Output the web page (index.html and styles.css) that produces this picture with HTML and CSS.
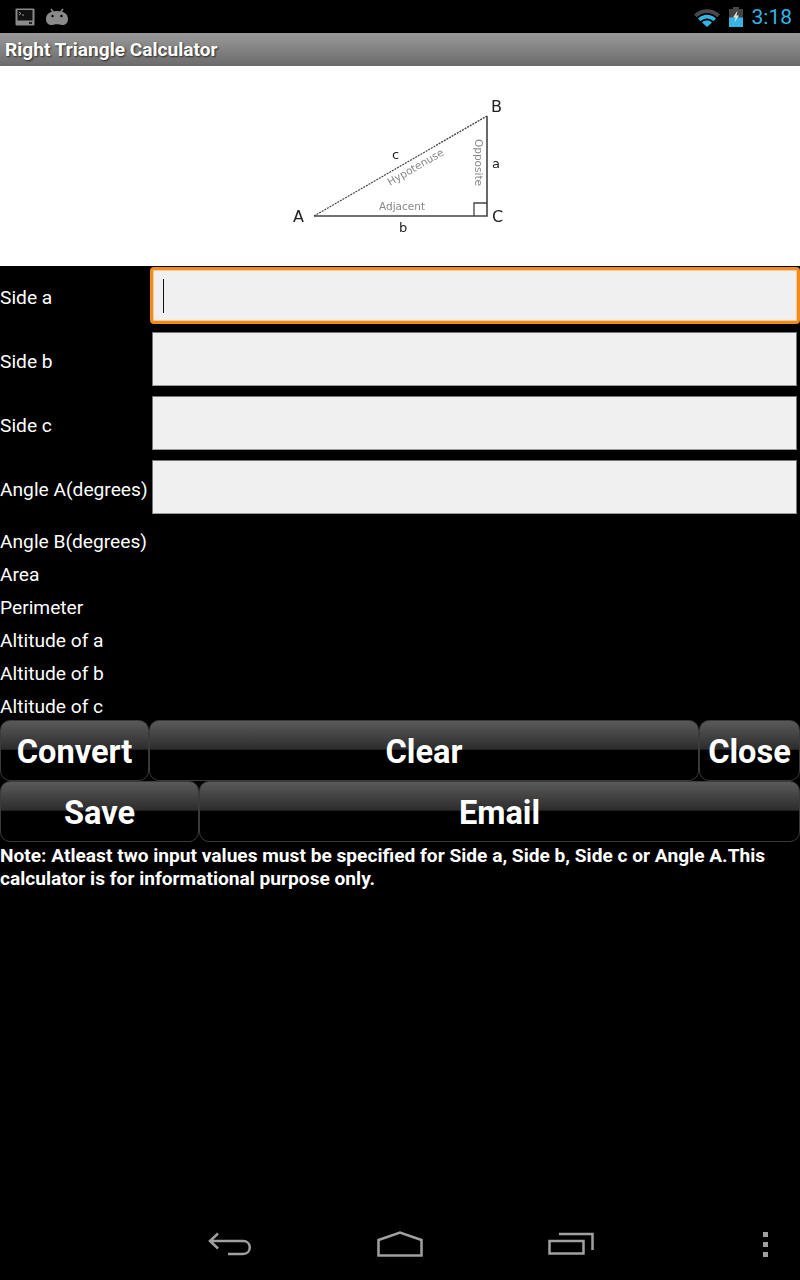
FILE: index.html
```html
<!DOCTYPE html>
<html lang="en">
<head>
    <meta charset="UTF-8">
    <meta name="viewport" content="width=device-width, initial-scale=1.0">
    <title>Right Triangle Calculator</title>
    <link rel="stylesheet" href="styles.css">
</head>
<body>
    <div class="page">
        <div class="status-bar">
            <div class="status-left">
                <svg class="icon-terminal" width="22" height="20" viewBox="0 0 22 20">
                    <rect x="1.500" y="1.500" width="19" height="17" rx="1" fill="#8a8a8a"/>
                    <rect x="3.500" y="3" width="15" height="10.500" fill="#111"/>
                    <path d="M5 5l2 1.500-2 1.500M8 8h2" stroke="#999" fill="none"/>
                    <rect x="15" y="15" width="3" height="2" fill="#222"/>
                </svg>
                <svg class="icon-android" width="24" height="18" viewBox="0 0 24 18">
                    <path d="M6 1l2.500 3.500M18 1l-2.500 3.500" stroke="#8a8a8a" stroke-width="1.500"/>
                    <path d="M1 11C1 6 5 3 12 3s11 3 11 8c0 4-2.500 6-6 6-2 0-3-.7-5-.7s-3 .7-5 .7c-3.500 0-6-2-6-6z" fill="#8a8a8a"/>
                    <circle cx="7.500" cy="8" r="1.200" fill="#000"/>
                    <circle cx="16.500" cy="8" r="1.200" fill="#000"/>
                </svg>
            </div>
            <div class="status-right">
                <svg class="icon-wifi" width="28" height="20" viewBox="0 0 28 20">
                    <path d="M1 7.500C8.500 .5 19.500 .5 27 7.500l-2.500 2.800C18 4.500 10 4.500 3.500 10.300z" fill="#4a4a4a"/>
                    <path d="M5 11.500c5.500-5 12.500-5 18 0l-2.500 2.700c-4-3.500-9-3.500-13 0z" fill="#33b5e5"/>
                    <path d="M9 15.500c3-2.600 7-2.600 10 0L14 20z" fill="#33b5e5"/>
                </svg>
                <svg class="icon-battery" width="14" height="20" viewBox="0 0 14 20">
                    <rect x="4" y="0" width="6" height="2" fill="#4a4a4a"/>
                    <rect x="0" y="2" width="14" height="18" fill="#444"/>
                    <rect x="0" y="10.500" width="14" height="9.500" fill="#33b5e5"/>
                    <path d="M8.500 3.500L4 10.500h2.500L5.500 15.500l4.500-7H7.500z" fill="#e0e0e0"/>
                </svg>
                <span class="clock">3:18</span>
            </div>
        </div>

        <div class="title-bar">Right Triangle Calculator</div>

        <div class="diagram">
            <svg width="800" height="200" viewBox="0 66 800 200">
                <path d="M314 216L487 116" stroke="#444" stroke-width="1.300" stroke-dasharray="2 1" fill="none"/>
                <path d="M314 216H487V116" stroke="#444" stroke-width="1.600" fill="none"/>
                <path d="M474 216V203H487" stroke="#444" stroke-width="1.300" fill="none"/>
                <text class="tri-label" x="293" y="222">A</text>
                <text class="tri-label" x="491" y="112">B</text>
                <text class="tri-label" x="492" y="222">C</text>
                <text class="tri-small" x="399" y="232">b</text>
                <text class="tri-small" x="492" y="168">a</text>
                <text class="tri-small" x="392" y="159">c</text>
                <text class="tri-faint" x="379" y="210">Adjacent</text>
                <text class="tri-faint" transform="translate(390 186) rotate(-30)">Hypotenuse</text>
                <text class="tri-faint" transform="translate(475 139) rotate(90)">Opposite</text>
            </svg>
        </div>

        <div class="form">
            <div class="input-row">
                <label class="field-label">Side a</label>
                <div class="field focused"><span class="caret"></span></div>
            </div>
            <div class="input-row">
                <label class="field-label">Side b</label>
                <div class="field"></div>
            </div>
            <div class="input-row">
                <label class="field-label">Side c</label>
                <div class="field"></div>
            </div>
            <div class="input-row">
                <label class="field-label">Angle A(degrees)</label>
                <div class="field"></div>
            </div>
        </div>

        <div class="results">
            <div class="result-row">Angle B(degrees)</div>
            <div class="result-row">Area</div>
            <div class="result-row">Perimeter</div>
            <div class="result-row">Altitude of a</div>
            <div class="result-row">Altitude of b</div>
            <div class="result-row">Altitude of c</div>
        </div>

        <div class="button-row">
            <button class="btn btn-convert">Convert</button>
            <button class="btn btn-clear">Clear</button>
            <button class="btn btn-close">Close</button>
        </div>
        <div class="button-row">
            <button class="btn btn-save">Save</button>
            <button class="btn btn-email">Email</button>
        </div>

        <p class="note">Note: Atleast two input values must be specified for Side a, Side b, Side c or Angle A.This calculator is for informational purpose only.</p>

        <div class="nav-bar">
            <svg class="nav-back" width="44" height="24" viewBox="0 0 44 24">
                <path d="M10 1.500L2 9l8 7.500M2 9h33c9 0 9 13 0 13H20" stroke="#a0a0a0" stroke-width="2.500" fill="none"/>
            </svg>
            <svg class="nav-home" width="46" height="26" viewBox="0 0 46 26">
                <path d="M1.500 24.500V9L23 1.500 44.500 9v15.500z" stroke="#a0a0a0" stroke-width="2.500" fill="none"/>
            </svg>
            <svg class="nav-recent" width="46" height="24" viewBox="0 0 46 24">
                <path d="M1.500 9h34v12.500h-34z" stroke="#a0a0a0" stroke-width="2.500" fill="none"/>
                <path d="M11 2h33.500v16" stroke="#a0a0a0" stroke-width="2.500" fill="none"/>
            </svg>
            <div class="nav-menu"><i></i><i></i><i></i></div>
        </div>
    </div>
</body>
</html>
```

FILE: styles.css
```css
* {
    margin: 0;
    padding: 0;
    box-sizing: border-box;
    font-family: 'Roboto', sans-serif;
}

body {
    background-color: #000;
}

.page {
    display: flex;
    flex-direction: column;
    width: 800px;
    height: 1280px;
    overflow: hidden;
    color: #fff;
    background-color: #000;
}

.status-bar {
    display: flex;
    justify-content: space-between;
    align-items: center;
    height: 33px;
    flex-shrink: 0;
    padding: 0 8px 0 14px;
}

.status-left {
    display: flex;
    align-items: center;
    gap: 9px;
}

.status-right {
    display: flex;
    align-items: center;
    gap: 8px;
}

.clock {
    margin-left: 1px;
    font-size: 21px;
    color: #33b5e5;
}

.title-bar {
    height: 33px;
    flex-shrink: 0;
    padding-left: 5px;
    line-height: 33px;
    font-size: 19.100px;
    font-weight: 700;
    background: linear-gradient(#9a9a9a, #6b6b6b);
    text-shadow: 1px 1px 2px rgba(0, 0, 0, 0.7);
}

.diagram {
    height: 200px;
    flex-shrink: 0;
    background-color: #fff;
}

.diagram svg {
    display: block;
    filter: blur(0.6px);
}

.tri-label {
    font-family: 'DejaVu Sans', sans-serif;
    font-size: 16px;
    fill: #222;
}

.tri-small {
    font-family: 'DejaVu Sans', sans-serif;
    font-size: 13px;
    fill: #222;
}

.tri-faint {
    font-family: 'DejaVu Sans', sans-serif;
    font-size: 10.500px;
    fill: #888;
}

.form {
    margin-top: -3px;
}

.input-row {
    display: flex;
    align-items: center;
    height: 64px;
}

.field-label {
    width: 152px;
    flex-shrink: 0;
    padding-top: 4px;
    font-size: 19.200px;
    white-space: nowrap;
}

.field {
    display: flex;
    align-items: center;
    width: 645px;
    height: 54px;
    padding-left: 11px;
    background-color: #f0f0f0;
    border: 1px solid #777;
    border-bottom-color: #999;
}

.field.focused {
    width: 650px;
    height: 57px;
    margin-left: -2px;
    margin-top: 1px;
    padding-left: 10px;
    border: 3px solid #f08c1e;
    border-radius: 4px;
    box-shadow: inset 0 0 1px 1px #f7c98f;
}

.caret {
    width: 1px;
    height: 34px;
    background-color: #111;
}

.results {
    height: 201px;
    flex-shrink: 0;
    padding-top: 6px;
}

.result-row {
    height: 33px;
    line-height: 33px;
    font-size: 19.200px;
}

.button-row {
    display: flex;
    height: 61px;
    flex-shrink: 0;
}

.btn {
    height: 61px;
    padding-top: 2px;
    font-size: 32.600px;
    font-weight: 700;
    color: #fff;
    background: linear-gradient(#5a5a5a 0%, #2c2c2c 48%, #000 49%, #000 100%);
    border: 1px solid #3a3a3a;
    border-radius: 10px;
}

.btn-convert {
    width: 149px;
}

.btn-clear {
    width: 550px;
}

.btn-close {
    width: 101px;
}

.btn-save {
    width: 199px;
}

.btn-email {
    width: 601px;
}

.note {
    padding-top: 2px;
    font-size: 19.150px;
    font-weight: 700;
    line-height: 23px;
}

.nav-bar {
    position: relative;
    display: flex;
    justify-content: center;
    align-items: center;
    gap: 125px;
    height: 72px;
    margin-top: auto;
    padding-left: 2px;
    flex-shrink: 0;
}

.nav-menu {
    position: absolute;
    left: 763px;
    top: 24px;
    display: flex;
    flex-direction: column;
    gap: 5px;
}

.nav-menu i {
    display: block;
    width: 5px;
    height: 5px;
    background-color: #a0a0a0;
}
```
